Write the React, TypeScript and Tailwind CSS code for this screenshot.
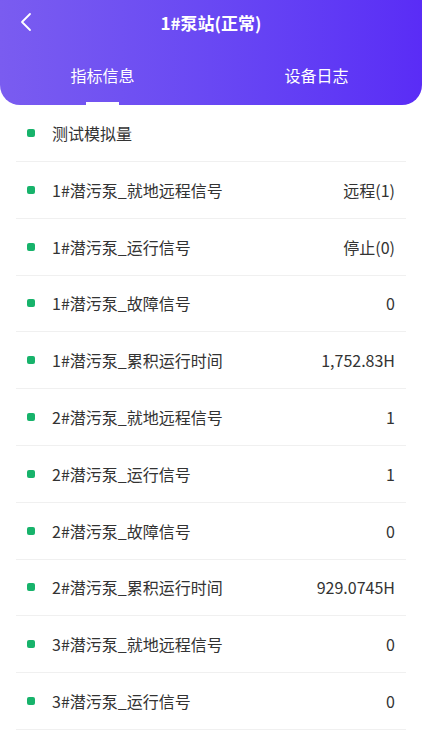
const rows: [string, string][] = [
  ["测试模拟量", ""],
  ["1#潜污泵_就地远程信号", "远程(1)"],
  ["1#潜污泵_运行信号", "停止(0)"],
  ["1#潜污泵_故障信号", "0"],
  ["1#潜污泵_累积运行时间", "1,752.83H"],
  ["2#潜污泵_就地远程信号", "1"],
  ["2#潜污泵_运行信号", "1"],
  ["2#潜污泵_故障信号", "0"],
  ["2#潜污泵_累积运行时间", "929.0745H"],
  ["3#潜污泵_就地远程信号", "0"],
  ["3#潜污泵_运行信号", "0"],
];

export default function App() {
  return (
    <div
      className="w-[422px] h-[750px] overflow-hidden bg-white"
      style={{ fontFamily: '"Noto Sans CJK SC", "Noto Sans", sans-serif' }}
    >
      {/* Header */}
      <div className="h-[105px] rounded-b-[20px] bg-gradient-to-r from-[#7a5cf0] to-[#5a2cf6] text-white">
        <div className="relative h-[44px] flex items-center justify-center">
          <button className="absolute left-[18px] top-[11px]">
            <svg width="16" height="22" viewBox="0 0 16 22" fill="none" stroke="white" strokeWidth="1.8" strokeLinecap="round" strokeLinejoin="round">
              <path d="M12 3 L4 11 L12 19" />
            </svg>
          </button>
          <h1 className="text-[17px] font-bold leading-none">1#泵站(正常)</h1>
        </div>
        <div className="flex h-[61px]">
          <div className="flex-1 flex flex-col items-center justify-end">
            <span className="text-[16px] leading-none mb-[19px] ml-[-6px]">指标信息</span>
            <div className="w-[33px] h-[3px] bg-white ml-[-6px]" />
          </div>
          <div className="flex-1 flex flex-col items-center justify-end">
            <span className="text-[16px] leading-none mb-[22px]">设备日志</span>
          </div>
        </div>
      </div>

      {/* List */}
      <div className="px-[16px]">
        {rows.map(([label, value], i) => (
          <div
            key={i}
            className={`flex items-center border-b border-[#f0f0f0] ${i === 0 ? "h-[57px]" : "h-[56.8px]"}`}
          >
            <div className="w-[8px] h-[8px] rounded-[2px] bg-[#17b36b] ml-[11px] mr-[17px]" />
            <span className="flex-1 text-[16px] text-[#333333]">{label}</span>
            <span className="text-[16px] text-[#333333] mr-[11px]">{value}</span>
          </div>
        ))}
      </div>
    </div>
  );
}
